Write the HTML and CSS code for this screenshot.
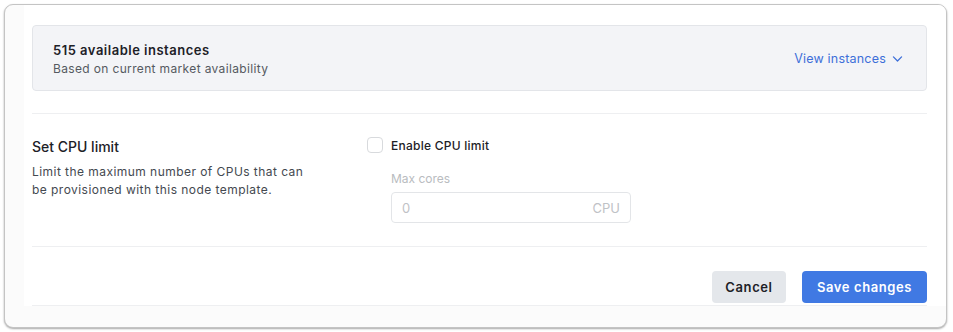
FILE: index.html
```html
<!DOCTYPE html>
<html lang="en">
<head>
    <meta charset="UTF-8">
    <title>Node template</title>
    <link rel="stylesheet" href="styles.css">
</head>
<body>
    <div class="card">
        <div class="panel">
            <div class="availability">
                <div class="availability-info">
                    <h3>515 available instances</h3>
                    <p>Based on current market availability</p>
                </div>
                <a class="view-link" href="#">
                    View instances
                    <svg width="13" height="13" viewBox="0 0 16 16" fill="none" stroke="currentColor" stroke-width="1.6" stroke-linecap="round" stroke-linejoin="round"><path d="M3 6l5 5 5-5"/></svg>
                </a>
            </div>

            <section class="setting">
                <div class="setting-label">
                    <h2>Set CPU limit</h2>
                    <p>Limit the maximum number of CPUs that can be provisioned with this node template.</p>
                </div>
                <div class="setting-control">
                    <label class="check">
                        <span class="checkbox"></span>
                        Enable CPU limit
                    </label>
                    <div class="field">
                        <span class="field-label">Max cores</span>
                        <div class="input-box">
                            <span class="value">0</span>
                            <span class="unit">CPU</span>
                        </div>
                    </div>
                </div>
            </section>

            <footer class="actions">
                <button class="btn btn-cancel">Cancel</button>
                <button class="btn btn-save">Save changes</button>
            </footer>
        </div>
    </div>
</body>
</html>
```

FILE: styles.css
```css
* {
    margin: 0;
    padding: 0;
    box-sizing: border-box;
}
body {
    font-family: 'Inter', 'Noto Sans', sans-serif;
    background: #fff;
    color: #1f2328;
    padding: 4px 6px 4px 4px;
}
.card {
    height: 324px;
    background: #fbfbfb;
    border: 1px solid #c4c4c4;
    border-radius: 9px;
    box-shadow: 0 1px 2px rgba(0,0,0,0.35);
    padding-left: 19px;
    overflow: hidden;
}
.panel {
    background: #fff;
    padding: 20px 19px 0 8px;
}
.availability {
    display: flex;
    justify-content: space-between;
    align-items: center;
    height: 66px;
    background: #f3f4f7;
    border: 1px solid #e3e5e9;
    border-radius: 4px;
    padding: 0 22px 0 20px;
}
.availability-info h3 {
    font-size: 13px;
    font-weight: 600;
    color: #1d2127;
    line-height: 20px;
    letter-spacing: 0.5px;
    margin-top: 1px;
}
.availability-info p {
    font-size: 12px;
    color: #555a61;
    line-height: 18px;
    letter-spacing: 0.35px;
}
.view-link {
    display: flex;
    align-items: center;
    gap: 5px;
    font-size: 12.5px;
    color: #3d6fd9;
    text-decoration: none;
    letter-spacing: 0.2px;
}
.setting {
    display: grid;
    grid-template-columns: 335px 1fr;
    margin-top: 22px;
    padding: 23px 0 23px;
    border-top: 1px solid #eeeff1;
    border-bottom: 1px solid #eeeff1;
}
.setting-label h2 {
    font-size: 14px;
    font-weight: 500;
    color: #1d2127;
    line-height: 20px;
    margin-bottom: 6px;
}
.setting-label p {
    font-size: 12px;
    line-height: 18px;
    color: #444950;
    max-width: 280px;
    letter-spacing: 0.45px;
}
.check {
    display: flex;
    align-items: center;
    gap: 8px;
    font-size: 12px;
    font-weight: 500;
    color: #1d2127;
    height: 16px;
    letter-spacing: 0.25px;
}
.checkbox {
    width: 16px;
    height: 16px;
    border: 1px solid #d8dadd;
    border-radius: 4px;
    background: #fff;
}
.field {
    margin: 18px 0 0 24px;
}
.field-label {
    display: block;
    font-size: 12px;
    color: #b9bcc0;
    line-height: 16px;
    margin-bottom: 5px;
}
.input-box {
    display: flex;
    justify-content: space-between;
    align-items: center;
    width: 240px;
    height: 31px;
    border: 1px solid #e3e5e8;
    border-radius: 4px;
    padding: 0 10px;
    font-size: 13px;
    color: #bfc2c6;
}
.actions {
    display: flex;
    justify-content: flex-end;
    gap: 16px;
    padding: 24px 0 2px;
    border-bottom: 1px solid #eeeff1;
}
.btn {
    font-family: inherit;
    font-size: 13px;
    font-weight: 600;
    height: 32px;
    border: none;
    border-radius: 4px;
    cursor: pointer;
    letter-spacing: 0.6px;
}
.btn-cancel {
    width: 74px;
    background: #e4e7eb;
    color: #1d2127;
}
.btn-save {
    width: 125px;
    background: #4079e3;
    color: #fff;
}
```
